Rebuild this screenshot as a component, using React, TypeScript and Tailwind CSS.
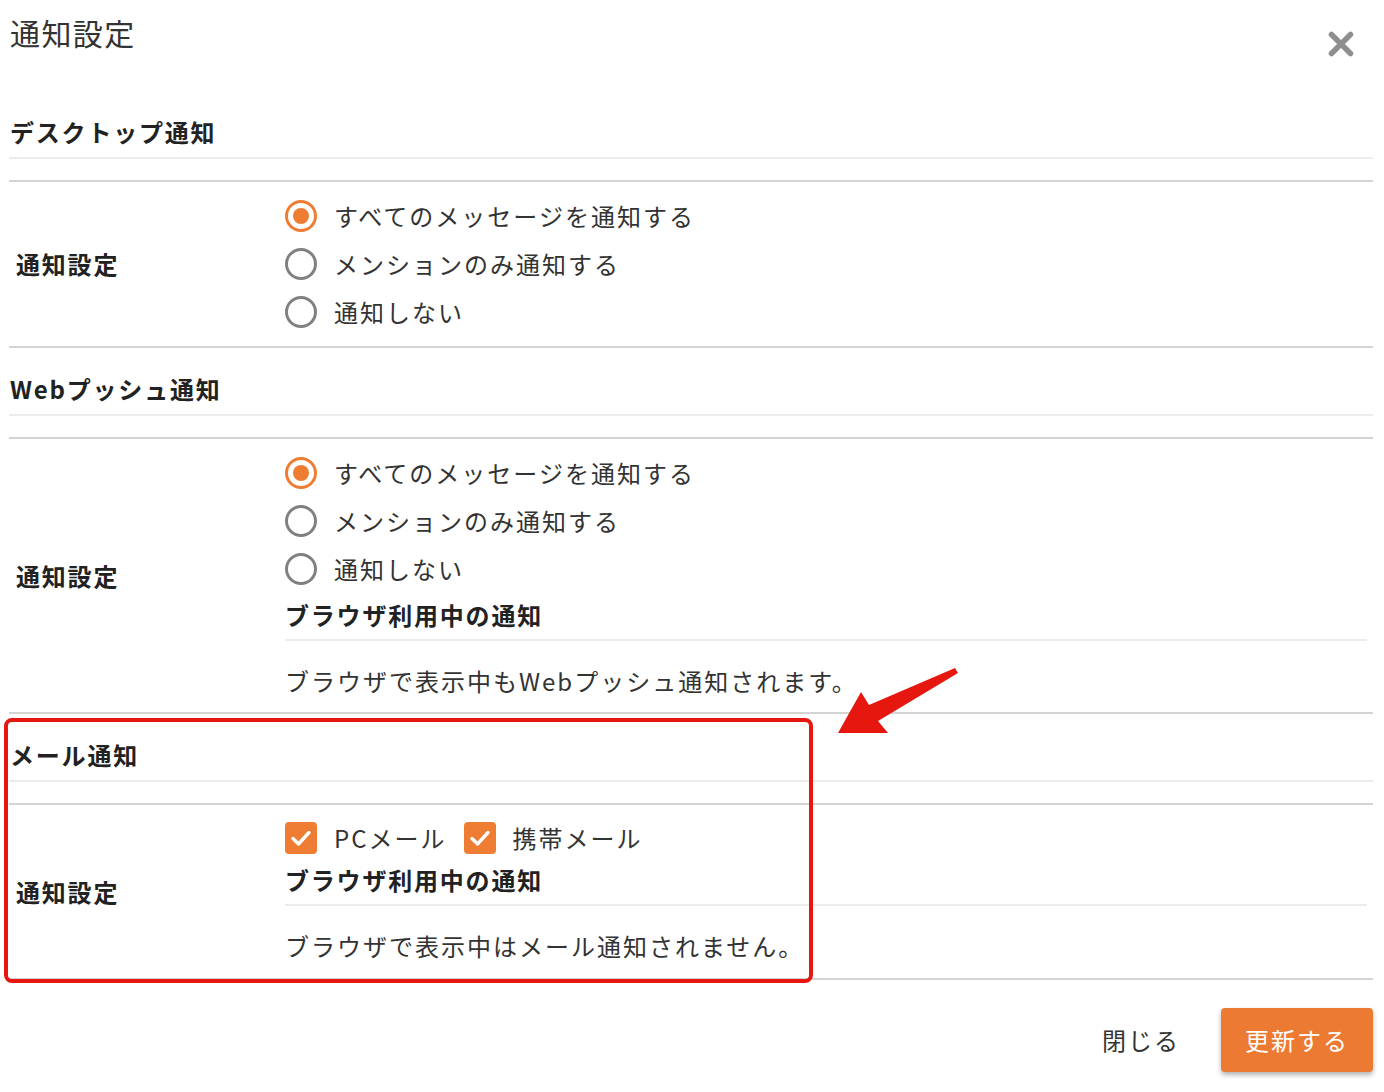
import React from "react";

const font = { fontFamily: '"Noto Sans CJK JP", "Noto Sans", sans-serif' };

function Radio({ checked, label }: { checked?: boolean; label: string }) {
  return (
    <div className="flex h-[48px] items-center">
      <span
        className={
          checked
            ? "flex h-[32px] w-[32px] items-center justify-center rounded-full border-[3px] border-[#ee7d33]"
            : "flex h-[32px] w-[32px] items-center justify-center rounded-full border-[3px] border-[#808080]"
        }
      >
        {checked && <span className="h-[16px] w-[16px] rounded-full bg-[#ee7d33]" />}
      </span>
      <span className="ml-[17px] text-[24px] leading-[36px] tracking-[2px] text-[#333]">{label}</span>
    </div>
  );
}

function Check({ label }: { label: string }) {
  return (
    <div className="flex h-[48px] items-center">
      <span className="flex h-[32px] w-[32px] items-center justify-center rounded-[4px] bg-[#ee7d33]">
        <svg width="24" height="24" viewBox="0 0 24 24">
          <path d="M4 12.5 L9.5 18 L20 6.5" fill="none" stroke="#fff" strokeWidth="3.4" strokeLinecap="round" strokeLinejoin="round" />
        </svg>
      </span>
      <span className="ml-[17px] text-[24px] leading-[36px] tracking-[2px] text-[#333]">{label}</span>
    </div>
  );
}

function Heading({ children }: { children: React.ReactNode }) {
  return (
    <div className="border-b-2 border-[#ececec] pt-[23px] pb-[7px]">
      <div className="pl-[1px] text-[24px] font-bold leading-[36px] tracking-[1.8px] text-[#222]">{children}</div>
    </div>
  );
}

function Row({ children }: { children: React.ReactNode }) {
  return (
    <div className="mt-[21px] flex border-t-2 border-b-2 border-t-[#d4d4d4] border-b-[#d4d4d4]">
      <div className="flex w-[276px] shrink-0 items-center pl-[7px] text-[24px] font-bold leading-[36px] tracking-[1.8px] text-[#222]">
        通知設定
      </div>
      <div className="flex-1 pr-[6px]">{children}</div>
    </div>
  );
}

function SubNote({ text, top, bottom }: { text: string; top: string; bottom: string }) {
  return (
    <div className={top}>
      <div className="border-b-2 border-[#ececec] pb-[6px] text-[24px] font-bold leading-[36px] tracking-[1.8px] text-[#222]">
        ブラウザ利用中の通知
      </div>
      <div className={"mt-[22px] text-[24px] leading-[36px] tracking-[2px] text-[#333] " + bottom}>{text}</div>
    </div>
  );
}

export default function App() {
  return (
    <div className="relative h-[1092px] w-[1384px] overflow-hidden bg-white" style={font}>
      <div className="pl-[9px] pr-[11px]">
        <div className="flex h-[91px] items-start justify-between">
          <div className="pl-[1px] text-[30px] leading-[64px] tracking-[1.4px] text-[#333]">通知設定</div>
          <svg className="mt-[31px] mr-[19px]" width="26" height="26" viewBox="0 0 26 26">
            <path d="M3.5 3.5 L22.5 22.5 M22.5 3.5 L3.5 22.5" stroke="#8e8e8e" strokeWidth="5.5" strokeLinecap="round" />
          </svg>
        </div>

        <Heading>デスクトップ通知</Heading>
        <Row>
          <div className="py-[10px]">
            <Radio checked label="すべてのメッセージを通知する" />
            <Radio label="メンションのみ通知する" />
            <Radio label="通知しない" />
          </div>
        </Row>

        <Heading>Webプッシュ通知</Heading>
        <Row>
          <div className="pt-[10px]">
            <Radio checked label="すべてのメッセージを通知する" />
            <Radio label="メンションのみ通知する" />
            <Radio label="通知しない" />
            <SubNote top="pt-[4px]" bottom="pb-[13px]" text="ブラウザで表示中もWebプッシュ通知されます。" />
          </div>
        </Row>

        <Heading>メール通知</Heading>
        <Row>
          <div className="pt-[9px]">
            <div className="flex gap-[17px]">
              <Check label="PCメール" />
              <Check label="携帯メール" />
            </div>
            <SubNote top="pt-0" bottom="pb-[14px]" text="ブラウザで表示中はメール通知されません。" />
          </div>
        </Row>

        <div className="mt-[28px] flex items-center justify-end gap-[41px]">
          <span className="text-[24px] leading-[36px] tracking-[2px] text-[#333]">閉じる</span>
          <button className="h-[64px] w-[152px] rounded-[4px] bg-[#ed7a32] text-[24px] leading-[36px] tracking-[2px] text-white shadow-[0_3px_5px_rgba(0,0,0,0.3)]">
            更新する
          </button>
        </div>
      </div>

      <div className="pointer-events-none absolute left-[4px] top-[718px] h-[265px] w-[809px] rounded-[8px] border-[4px] border-[#e5170f]" />
      <svg className="pointer-events-none absolute left-0 top-0" width="1384" height="1092" viewBox="0 0 1384 1092">
        <polygon points="838,733 861,692 869,705 955,668 958,673 878,721 888,733" fill="#e5170f" />
      </svg>
    </div>
  );
}
